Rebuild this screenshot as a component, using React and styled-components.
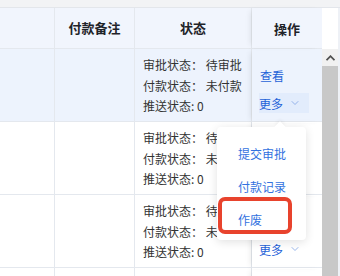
import styled, { createGlobalStyle } from "styled-components";
import { ChevronDown } from "lucide-react";

const GlobalStyle = createGlobalStyle`
  html, body {
    margin: 0;
    padding: 0;
    background: #fff;
    overflow: hidden;
  }
  body {
    font-family: "Noto Sans CJK SC", "Noto Sans", sans-serif;
    font-size: 12px;
    color: #333;
  }
`;

const Page = styled.div`
  width: 340px;
  height: 276px;
  overflow: hidden;
  display: flex;
  flex-direction: column;
`;

const TopStrip = styled.div`
  height: 7px;
  background: #f2f3f5;
  border-bottom: 1px solid #e3e6eb;
  flex-shrink: 0;
`;

const Body = styled.div`
  display: flex;
  flex: 1;
  min-height: 0;
`;

const Table = styled.div`
  width: 322px;
  display: flex;
  flex-direction: column;
`;

const Row = styled.div`
  display: grid;
  grid-template-columns: 55px 80px 117px 70px;
  height: ${(p) => (p.$head ? "41px" : "73px")};
  flex-shrink: 0;
  box-sizing: border-box;
  border-bottom: 1px solid #e4e8ee;
  background: ${(p) => (p.$head ? "#f1f5fd" : p.$hover ? "#edf3fd" : "#fff")};
`;

const Cell = styled.div`
  box-sizing: border-box;
  border-right: 1px solid #e4e8ee;
  padding: 6px 8px;
  line-height: 20.5px;
`;

const HeadCell = styled(Cell)`
  display: flex;
  align-items: center;
  justify-content: center;
  padding: 0;
  font-size: 13px;
  font-weight: 700;
  color: #1f2329;
`;

const FixedCell = styled.div`
  position: relative;
  box-sizing: border-box;
  padding: ${(p) => (p.$head ? "0" : "17px 0 0 7px")};
  display: flex;
  flex-direction: column;
  align-items: ${(p) => (p.$head ? "center" : "flex-start")};
  justify-content: ${(p) => (p.$head ? "center" : "flex-start")};
  gap: 7px;
  box-shadow: -4px 0 6px -3px rgba(0, 0, 0, 0.1);
  font-size: ${(p) => (p.$head ? "13px" : "12px")};
  font-weight: ${(p) => (p.$head ? 700 : 400)};
  color: #1f2329;
`;

const Link = styled.span`
  color: #1f62d8;
  line-height: 20px;
  padding-left: 1px;
`;

const More = styled.span`
  position: relative;
  display: flex;
  align-items: center;
  gap: 6px;
  width: 50px;
  height: 20px;
  box-sizing: border-box;
  color: #1f62d8;
  background: ${(p) => (p.$active ? "#e2ecfc" : "transparent")};
  svg {
    color: #7a9fe3;
  }
`;

const Dropdown = styled.div`
  position: absolute;
  z-index: 10;
  top: 34px;
  left: -42px;
  width: 89px;
  box-sizing: border-box;
  padding: 10px 0 4px;
  background: #fff;
  border-radius: 4px;
  box-shadow: 0 2px 10px rgba(0, 0, 0, 0.12);
  &::before {
    content: "";
    position: absolute;
    top: -4px;
    left: 59px;
    width: 8px;
    height: 8px;
    background: #fff;
    transform: rotate(45deg);
    box-shadow: -2px -2px 3px rgba(0, 0, 0, 0.04);
  }
`;

const MenuItem = styled.div`
  height: 33px;
  display: flex;
  align-items: center;
  padding-left: 21px;
  color: #3372e0;
  font-size: 12px;
  white-space: nowrap;
`;

const Highlight = styled.div`
  position: absolute;
  left: 1px;
  top: 70px;
  width: 74px;
  height: 37px;
  box-sizing: border-box;
  border: 4px solid #e8432d;
  border-radius: 7px;
`;

const ScrollCol = styled.div`
  width: 18px;
  display: flex;
  flex-direction: column;
  background: #fff;
  border-right: 2px solid #eef1f6;
  box-sizing: border-box;
`;

const ScrollHead = styled.div`
  height: 41px;
  flex-shrink: 0;
`;

const ScrollArrow = styled.div`
  height: 17px;
  background: #f1f1f1;
  display: flex;
  align-items: center;
  justify-content: center;
`;

const ScrollThumb = styled.div`
  flex: 1;
  background: #c8c8c8;
`;

const rows = [
  { approve: "待审批", pay: "未付款", push: "0" },
  { approve: "待审批", pay: "未付款", push: "0" },
  { approve: "待审批", pay: "未付款", push: "0" },
];

export default function App() {
  return (
    <Page>
      <GlobalStyle />
      <TopStrip />
      <Body>
        <Table>
          <Row $head>
            <HeadCell />
            <HeadCell>付款备注</HeadCell>
            <HeadCell>状态</HeadCell>
            <FixedCell $head>操作</FixedCell>
          </Row>
          {rows.map((r, i) => (
            <Row key={i} $hover={i === 0}>
              <Cell />
              <Cell />
              <Cell>
                <div>审批状态： {r.approve}</div>
                <div>付款状态： {r.pay}</div>
                <div>推送状态: {r.push}</div>
              </Cell>
              <FixedCell>
                <Link>查看</Link>
                <More $active={i === 0}>
                  更多
                  <ChevronDown size={12} strokeWidth={1.5} />
                  {i === 0 && (
                    <Dropdown>
                      <MenuItem>提交审批</MenuItem>
                      <MenuItem>付款记录</MenuItem>
                      <MenuItem>作废</MenuItem>
                      <Highlight />
                    </Dropdown>
                  )}
                </More>
              </FixedCell>
            </Row>
          ))}
          <Row>
            <Cell />
            <Cell />
            <Cell />
            <FixedCell />
          </Row>
        </Table>
        <ScrollCol>
          <ScrollHead />
          <ScrollArrow>
            <svg width="9" height="6" viewBox="0 0 9 6">
              <path d="M0.5 5.2 L4.5 1.2 L8.5 5.2" fill="none" stroke="#505050" strokeWidth="1.8" />
            </svg>
          </ScrollArrow>
          <ScrollThumb />
        </ScrollCol>
      </Body>
    </Page>
  );
}
